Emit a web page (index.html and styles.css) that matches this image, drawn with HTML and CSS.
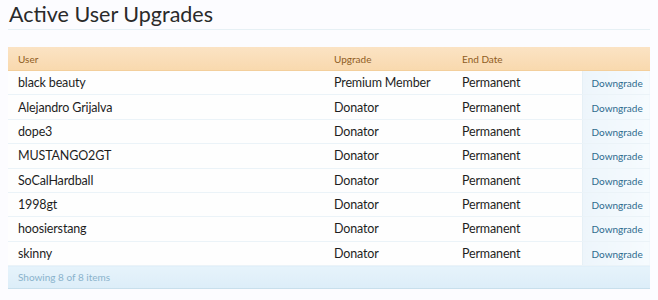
FILE: index.html
```html
<!DOCTYPE html>
<html>
<head>
<meta charset="utf-8">
<link rel="stylesheet" href="styles.css">
</head>
<body>
<div class="page">
  <h1 class="title">Active User Upgrades</h1>
  <table class="list">
    <colgroup>
      <col class="c-user"><col class="c-upg"><col class="c-end"><col class="c-act">
    </colgroup>
    <thead>
      <tr><th>User</th><th>Upgrade</th><th>End Date</th><th></th></tr>
    </thead>
    <tbody>
      <tr><td>black beauty</td><td>Premium Member</td><td>Permanent</td><td class="act"><a href="#">Downgrade</a></td></tr>
      <tr><td>Alejandro Grijalva</td><td>Donator</td><td>Permanent</td><td class="act"><a href="#">Downgrade</a></td></tr>
      <tr><td>dope3</td><td>Donator</td><td>Permanent</td><td class="act"><a href="#">Downgrade</a></td></tr>
      <tr><td>MUSTANGO2GT</td><td>Donator</td><td>Permanent</td><td class="act"><a href="#">Downgrade</a></td></tr>
      <tr><td>SoCalHardball</td><td>Donator</td><td>Permanent</td><td class="act"><a href="#">Downgrade</a></td></tr>
      <tr><td>1998gt</td><td>Donator</td><td>Permanent</td><td class="act"><a href="#">Downgrade</a></td></tr>
      <tr><td>hoosierstang</td><td>Donator</td><td>Permanent</td><td class="act"><a href="#">Downgrade</a></td></tr>
      <tr><td>skinny</td><td>Donator</td><td>Permanent</td><td class="act"><a href="#">Downgrade</a></td></tr>
    </tbody>
    <tfoot>
      <tr><td colspan="4">Showing 8 of 8 items</td></tr>
    </tfoot>
  </table>
</div>
</body>
</html>
```
FILE: styles.css
```css
html, body {
  margin: 0;
  padding: 0;
  background: #fcfcff;
}
body {
  font-family: Lato, "Open Sans", sans-serif;
  color: #222;
}
.page {
  padding: 0 8px 0 8px;
}
.title {
  margin: 0;
  padding: 2px 0 3px 1px;
  font-size: 21.5px;
  font-weight: 400;
  line-height: 24px;
  color: #2a2a2a;
  border-bottom: 1px solid #e6f0f5;
}
.list {
  margin-top: 17px;
  width: 642px;
  border-collapse: collapse;
  table-layout: fixed;
  background: #fefefe;
}
.c-user { width: 316px; }
.c-upg { width: 128px; }
.c-end { width: 130px; }
.c-act { width: 68px; }
.list th {
  height: 23px;
  padding: 0 0 0 10px;
  text-align: left;
  font-size: 10px;
  font-weight: 400;
  color: #8f5c1f;
  background: linear-gradient(#fbe3c4, #f9d9ae);
  border-bottom: 1px solid #f3cf9c;
}
.list tbody td {
  height: 23.375px;
  padding: 0 0 0 10px;
  font-size: 12.5px;
  letter-spacing: -0.15px;
  color: #1e1e1e;
  border-bottom: 1px solid #ebf3f8;
}
.list tbody td.act {
  padding-left: 9px;
  background: linear-gradient(90deg, #edf5fb, #f6fbfe);
  border-left: 1px solid #e6f0f6;
  letter-spacing: 0;
}
.act a {
  font-size: 10px;
  color: #2e6b8e;
  text-decoration: none;
}
.list tfoot td {
  height: 22px;
  padding: 0 0 0 10px;
  font-size: 10px;
  color: #8ab3cc;
  background: linear-gradient(#e6f3fb, #dcedf8);
  border-bottom: 1px solid #c8dfec;
}
```
